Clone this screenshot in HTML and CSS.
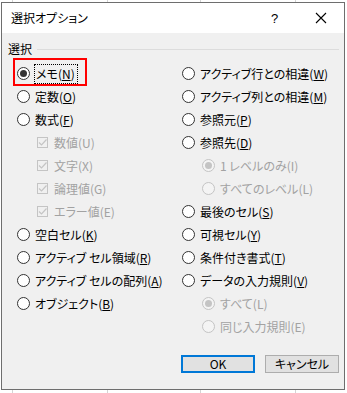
FILE: index.html
```html
<!DOCTYPE html>
<html lang="ja">
<head>
<meta charset="utf-8">
<link rel="stylesheet" href="styles.css">
</head>
<body>
<div class="dialog">
  <div class="titlebar">
    <span class="title">選択オプション</span>
    <span class="help">?</span>
    <span class="close"><svg width="12" height="12" viewBox="0 0 12 12"><path d="M1 1 L11 11 M11 1 L1 11" stroke="#000" stroke-width="1.1" fill="none"/></svg></span>
  </div>
  <div class="body">
    <div class="group-head"><span class="group-label">選択</span><span class="rule"></span></div>
    <div class="cols">
      <div class="col">
        <div class="row annotated"><span class="radio checked"></span><span class="label focus">メモ(<u>N</u>)</span><span class="redbox"></span></div>
        <div class="row"><span class="radio"></span><span class="label">定数(<u>O</u>)</span></div>
        <div class="row"><span class="radio"></span><span class="label">数式(<u>F</u>)</span></div>
        <div class="row sub disabled"><span class="check"><svg width="11" height="11" viewBox="0 0 11 11"><path d="M2 5.5 L4.5 8 L9.5 2.5" stroke="#c4c4c4" stroke-width="1.2" fill="none"/></svg></span><span class="label">数値(U)</span></div>
        <div class="row sub disabled"><span class="check"><svg width="11" height="11" viewBox="0 0 11 11"><path d="M2 5.5 L4.5 8 L9.5 2.5" stroke="#c4c4c4" stroke-width="1.2" fill="none"/></svg></span><span class="label">文字(X)</span></div>
        <div class="row sub disabled"><span class="check"><svg width="11" height="11" viewBox="0 0 11 11"><path d="M2 5.5 L4.5 8 L9.5 2.5" stroke="#c4c4c4" stroke-width="1.2" fill="none"/></svg></span><span class="label">論理値(G)</span></div>
        <div class="row sub disabled"><span class="check"><svg width="11" height="11" viewBox="0 0 11 11"><path d="M2 5.5 L4.5 8 L9.5 2.5" stroke="#c4c4c4" stroke-width="1.2" fill="none"/></svg></span><span class="label">エラー値(E)</span></div>
        <div class="row"><span class="radio"></span><span class="label">空白セル(<u>K</u>)</span></div>
        <div class="row"><span class="radio"></span><span class="label">アクティブ セル領域(<u>R</u>)</span></div>
        <div class="row"><span class="radio"></span><span class="label">アクティブ セルの配列(<u>A</u>)</span></div>
        <div class="row"><span class="radio"></span><span class="label">オブジェクト(<u>B</u>)</span></div>
      </div>
      <div class="col">
        <div class="row"><span class="radio"></span><span class="label">アクティブ行との相違(<u>W</u>)</span></div>
        <div class="row"><span class="radio"></span><span class="label">アクティブ列との相違(<u>M</u>)</span></div>
        <div class="row"><span class="radio"></span><span class="label">参照元(<u>P</u>)</span></div>
        <div class="row"><span class="radio"></span><span class="label">参照先(<u>D</u>)</span></div>
        <div class="row sub disabled"><span class="radio checked"></span><span class="label">1 レベルのみ(I)</span></div>
        <div class="row sub disabled"><span class="radio"></span><span class="label">すべてのレベル(L)</span></div>
        <div class="row"><span class="radio"></span><span class="label">最後のセル(<u>S</u>)</span></div>
        <div class="row"><span class="radio"></span><span class="label">可視セル(<u>Y</u>)</span></div>
        <div class="row"><span class="radio"></span><span class="label">条件付き書式(<u>T</u>)</span></div>
        <div class="row"><span class="radio"></span><span class="label">データの入力規則(<u>V</u>)</span></div>
        <div class="row sub disabled"><span class="radio checked"></span><span class="label">すべて(L)</span></div>
        <div class="row sub disabled"><span class="radio"></span><span class="label">同じ入力規則(E)</span></div>
      </div>
    </div>
    <div class="buttons">
      <button class="btn primary">OK</button>
      <button class="btn">キャンセル</button>
    </div>
  </div>
</div>
</body>
</html>
```

FILE: styles.css
```css
* { box-sizing: border-box; }
html, body {
  margin: 0;
  padding: 0;
  width: 347px;
  height: 393px;
  overflow: hidden;
}
body {
  background-color: #fff;
  background-image:
    linear-gradient(to right, transparent 12px, #d4d4d4 12px, #d4d4d4 13px, transparent 13px),
    linear-gradient(to right, transparent 107px, #d4d4d4 107px, #d4d4d4 108px, transparent 108px),
    linear-gradient(to right, transparent 200px, #d4d4d4 200px, #d4d4d4 201px, transparent 201px),
    linear-gradient(to right, transparent 295px, #d4d4d4 295px, #d4d4d4 296px, transparent 296px);
  font-family: "Noto Sans CJK JP", "Noto Sans", sans-serif;
  font-size: 12px;
  color: #000;
  font-feature-settings: "palt";
}
.dialog {
  margin: 2px 0 0 1px;
  width: 344px;
  height: 388px;
  border: 1px solid #6e6e6e;
  background: #f0f0f0;
  display: flex;
  flex-direction: column;
}
.titlebar {
  height: 30px;
  background: #fff;
  display: flex;
  align-items: center;
  padding-left: 9px;
  flex: none;
}
.title {
  flex: 1;
  font-size: 12px;
  line-height: 16px;
}
.help {
  font-family: "Liberation Sans", sans-serif;
  font-size: 13px;
  width: 12px;
  margin-right: 32px;
}
.close {
  display: flex;
  width: 12px;
  height: 12px;
  margin-right: 17px;
}
.body {
  flex: 1;
  display: flex;
  flex-direction: column;
  padding: 8px 5px 0 6px;
}
.group-head {
  display: flex;
  align-items: center;
  height: 16px;
}
.group-label {
  line-height: 16px;
}
.rule {
  flex: 1;
  height: 1px;
  background: #dcdcdc;
  margin-left: 5px;
  margin-right: 0;
}
.cols {
  display: grid;
  grid-template-columns: 165px 1fr;
  margin-top: 5px;
  padding-left: 9px;
}
.row {
  height: 23px;
  display: flex;
  align-items: center;
  position: relative;
  white-space: nowrap;
}
.row.sub { padding-left: 20px; }
.radio {
  width: 13px;
  height: 13px;
  border: 1px solid #333;
  border-radius: 50%;
  background: #fff;
  flex: none;
  display: flex;
  align-items: center;
  justify-content: center;
}
.radio.checked::after {
  content: "";
  width: 7px;
  height: 7px;
  border-radius: 50%;
  background: #333;
}
.disabled .radio { border-color: #c4c4c4; background: #f4f4f4; }
.disabled .radio.checked::after { background: #c4c4c4; }
.check {
  width: 11px;
  height: 11px;
  border: 1px solid #c4c4c4;
  flex: none;
  display: flex;
  margin-right: 1px;
}
.check svg { margin: -1px; }
.label {
  margin-left: 5px;
  line-height: 16px;
}
.disabled .label { color: #a2a2a2; }
.label u { text-underline-offset: 1px; }
.focus {
  outline: 1px dotted #000;
  outline-offset: 1px;
  margin-left: 6px;
  padding-right: 1px;
}
.redbox {
  position: absolute;
  left: -4px;
  top: -4px;
  width: 74px;
  height: 28px;
  border: 2px solid #ff0000;
}
.buttons {
  display: flex;
  justify-content: flex-end;
  gap: 10px;
  margin-top: 17px;
}
.btn {
  width: 74px;
  height: 18px;
  padding: 0;
  border: 1px solid #adadad;
  background: #e1e1e1;
  font-family: "Noto Sans CJK JP", "Noto Sans", sans-serif;
  font-size: 12px;
  color: #000;
  line-height: 14px;
  font-feature-settings: "palt";
}
.btn.primary {
  border: 2px solid #0078d7;
}
```
